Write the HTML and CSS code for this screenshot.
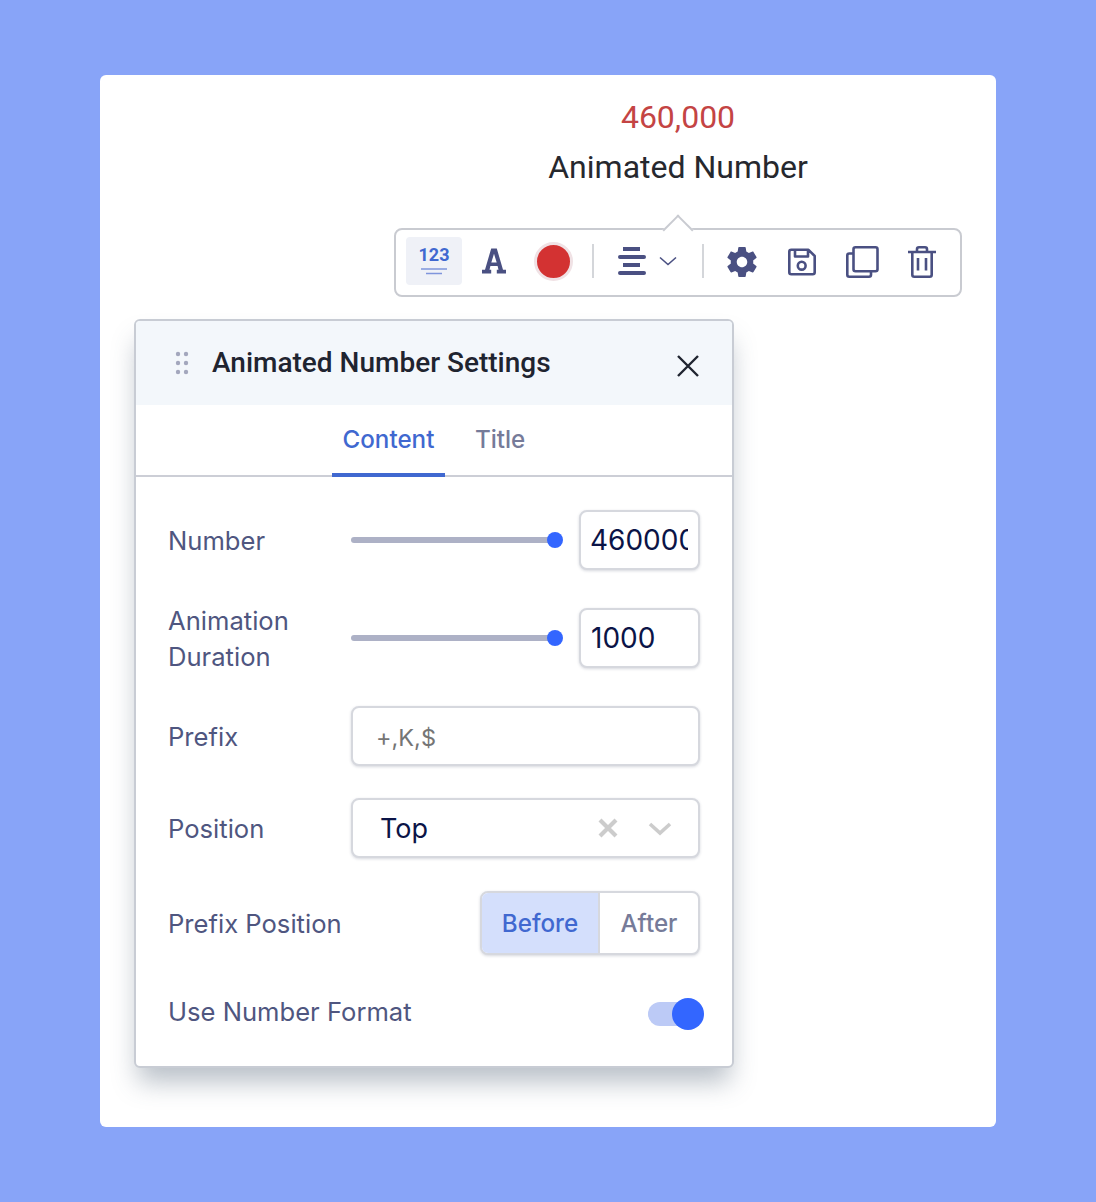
FILE: index.html
```html
<!DOCTYPE html>
<html lang="en">
<head>
  <meta charset="UTF-8" />
  <meta name="viewport" content="width=device-width, initial-scale=1.0"/>
  <title>Animated Number</title>
  <link rel="stylesheet" href="styles.css">
</head>
<body>
  <div class="card">
    <div class="widget">
      <div class="number">460,000</div>
      <div class="number-title">Animated Number</div>

      <div class="toolbar">
        <span class="toolbar-arrow"></span>
        <span class="tool tool-active">
          <svg width="32" height="34" viewBox="0 0 32 34">
            <text x="16" y="17" class="tool-123">123</text>
            <path d="M3 25H29M8 29.500H24" stroke="#7f95dc" stroke-width="1.500" fill="none"/>
          </svg>
        </span>
        <span class="tool tool-font">
          <svg width="26" height="28" viewBox="0 0 26 28">
            <path d="M10.200 1.500H15.800L22 22.700H25V26.500H15.800V22.700H17.500L16.600 19H9.400L8.500 22.700H10.200V26.500H1V22.700H4ZM13 6.800L10.300 15.500H15.700Z" fill="#4a5082" fill-rule="evenodd"/>
          </svg>
        </span>
        <span class="color-dot"></span>
        <span class="tool-sep sep-one"></span>
        <span class="tool-align">
          <svg width="30" height="30" viewBox="0 0 30 30">
            <path d="M6 3H23M6 19H23" stroke="#4a5082" stroke-width="4" fill="none"/>
            <path d="M3 11H27M3 27H27" stroke="#4a5082" stroke-width="4" stroke-linecap="round" fill="none"/>
          </svg>
          <svg class="align-caret" width="18" height="10" viewBox="0 0 18 10">
            <path d="M1 1.500L9 8.500L17 1.500" stroke="#4a5082" stroke-width="1.600" fill="none"/>
          </svg>
        </span>
        <span class="tool-sep sep-two"></span>
        <svg class="tool-gear" width="36" height="36" viewBox="0 0 24 24">
          <path d="M19.430 12.980c.04-.32.070-.64.070-.98s-.03-.66-.07-.98l2.110-1.650c.19-.15.240-.42.120-.64l-2-3.460c-.12-.22-.39-.30-.61-.22l-2.490 1c-.52-.40-1.080-.73-1.690-.98l-.38-2.650A.488.488 0 0 0 14 2h-4c-.25 0-.46.180-.49.420l-.38 2.650c-.61.250-1.170.590-1.690.98l-2.490-1c-.23-.090-.49 0-.61.220l-2 3.460c-.13.220-.07.490.12.640l2.110 1.650c-.04.320-.07.650-.07.980s.03.660.07.980l-2.110 1.650c-.19.150-.24.420-.12.640l2 3.460c.12.220.39.300.61.220l2.490-1c.52.400 1.080.730 1.690.980l.38 2.650c.03.240.24.420.49.420h4c.25 0 .46-.180.49-.420l.38-2.650c.61-.250 1.170-.590 1.690-.980l2.490 1c.23.090.49 0 .61-.220l2-3.460c.12-.220.070-.490-.12-.640l-2.110-1.650zM12 15.500c-1.930 0-3.500-1.570-3.500-3.500s1.570-3.500 3.500-3.500 3.500 1.570 3.500 3.500-1.570 3.500-3.500 3.500z" fill="#4a5082"/>
        </svg>
        <svg class="tool-save" width="30" height="30" viewBox="0 0 30 30">
          <path d="M4.300 2.800H21.500L27.700 9V25.200A2 2 0 0 1 25.700 27.200H4.300A2 2 0 0 1 2.300 25.200V4.800A2 2 0 0 1 4.300 2.800ZM8 2.800V9.500H21V2.800" stroke="#4a5082" stroke-width="2.600" stroke-linejoin="round" fill="none"/>
          <circle cx="14.700" cy="18.700" r="3.900" stroke="#4a5082" stroke-width="2.600" fill="none"/>
        </svg>
        <svg class="tool-copy" width="34" height="34" viewBox="0 0 34 34">
          <rect x="8.500" y="2.300" width="24" height="24" rx="2" stroke="#4a5082" stroke-width="2.600" fill="none"/>
          <path d="M8.500 8.500H4.300A2 2 0 0 0 2.300 10.500V29.700A2 2 0 0 0 4.300 31.700H24A2 2 0 0 0 26 29.700V26.300" stroke="#4a5082" stroke-width="2.600" fill="none"/>
        </svg>
        <svg class="tool-trash" width="28" height="34" viewBox="0 0 28 34">
          <path d="M0 7H28M9 7V4.300A2 2 0 0 1 11 2.300H17A2 2 0 0 1 19 4.300V7M4.300 7V29.700A2 2 0 0 0 6.300 31.700H21.700A2 2 0 0 0 23.700 29.700V7M10 13V25.500M18 13V25.500" stroke="#4a5082" stroke-width="2.600" fill="none"/>
        </svg>
      </div>
    </div>

    <div class="panel">
      <div class="panel-head">
        <svg class="drag" width="14" height="24" viewBox="0 0 14 24">
          <g fill="#a3a7bd">
            <circle cx="3" cy="3" r="2.200"/><circle cx="11" cy="3" r="2.200"/>
            <circle cx="3" cy="12" r="2.200"/><circle cx="11" cy="12" r="2.200"/>
            <circle cx="3" cy="21" r="2.200"/><circle cx="11" cy="21" r="2.200"/>
          </g>
        </svg>
        <h2>Animated Number Settings</h2>
        <svg class="close" width="24" height="24" viewBox="0 0 24 24">
          <path d="M2 2L22 22M22 2L2 22" stroke="#1f2430" stroke-width="2.400" fill="none"/>
        </svg>
      </div>

      <div class="tabs">
        <div class="tab tab-active">Content</div>
        <div class="tab">Title</div>
      </div>

      <div class="rows">
        <div class="row row-number">
          <label>Number</label>
          <div class="slider"><span class="thumb"></span></div>
          <div class="box box-small"><span class="clip">460000</span></div>
        </div>
        <div class="row row-duration">
          <label>Animation<br>Duration</label>
          <div class="slider"><span class="thumb"></span></div>
          <div class="box box-small">1000</div>
        </div>
        <div class="row row-prefix">
          <label>Prefix</label>
          <div class="box box-wide placeholder">+,K,$</div>
        </div>
        <div class="row row-position">
          <label>Position</label>
          <div class="box box-wide select">
            <span class="select-value">Top</span>
            <svg class="select-x" width="20" height="20" viewBox="0 0 20 20">
              <path d="M2 2L18 18M18 2L2 18" stroke="#cccccc" stroke-width="4.200" fill="none"/>
            </svg>
            <svg class="select-caret" width="24" height="14" viewBox="0 0 24 14">
              <path d="M2 2L12 11L22 2" stroke="#cccccc" stroke-width="3.600" fill="none"/>
            </svg>
          </div>
        </div>
        <div class="row row-prefixpos">
          <label>Prefix Position</label>
          <div class="toggle-group">
            <span class="choice choice-on">Before</span>
            <span class="choice">After</span>
          </div>
        </div>
        <div class="row row-format">
          <label>Use Number Format</label>
          <div class="switch"><span class="switch-knob"></span></div>
        </div>
      </div>
    </div>
  </div>
</body>
</html>
```

FILE: styles.css
```css
body {
  margin: 0;
  padding: 75px 100px;
  background-color: #88a4f8;
  font-family: "Roboto", sans-serif;
}

.card {
  height: 1052px;
  background-color: #ffffff;
  border-radius: 6px;
  overflow: hidden;
}

.widget {
  width: 566px;
  margin-left: 295px;
  padding-top: 23px;
  text-align: center;
}

.number {
  font-size: 32px;
  line-height: 38px;
  color: #c44444;
}

.number-title {
  margin-top: 12px;
  font-size: 32px;
  line-height: 38px;
  color: #26282e;
}

.toolbar {
  position: relative;
  display: flex;
  align-items: center;
  width: 554px;
  height: 62px;
  margin-top: 42px;
  margin-left: -1px;
  padding-left: 10px;
  padding-bottom: 3px;
  background: #ffffff;
  border: 2px solid #c9cbd1;
  border-radius: 8px;
}

.toolbar-arrow {
  position: absolute;
  left: 271px;
  top: -11px;
  width: 20px;
  height: 20px;
  background: #ffffff;
  border-left: 2px solid #c9cbd1;
  border-top: 2px solid #c9cbd1;
  transform: rotate(45deg);
}

.tool {
  display: flex;
  align-items: center;
  justify-content: center;
}

.tool-active {
  width: 56px;
  height: 48px;
  background-color: #eff1f7;
  border-radius: 4px;
}

.tool-123 {
  font-family: "Roboto", sans-serif;
  font-size: 18px;
  font-weight: 700;
  fill: #4068d0;
  text-anchor: middle;
}

.tool-font {
  margin-left: 19px;
}

.color-dot {
  width: 33px;
  height: 33px;
  margin-left: 27px;
  background-color: #d33232;
  border: 3px solid #f0e2e5;
  border-radius: 50%;
}

.tool-sep {
  width: 2px;
  height: 34px;
  background-color: #d4d6da;
}

.sep-one {
  margin-left: 19px;
}

.tool-align {
  display: flex;
  align-items: center;
  margin-left: 23px;
}

.align-caret {
  margin-left: 12px;
}

.sep-two {
  margin-left: 25px;
}

.tool-gear {
  margin-left: 20px;
  margin-top: 2px;
}

.tool-save {
  margin-left: 27px;
  margin-top: 1px;
}

.tool-copy {
  margin-left: 28px;
  margin-top: 2px;
}

.tool-trash {
  margin-left: 29px;
  margin-top: 2px;
}

.panel {
  width: 596px;
  height: 745px;
  margin-top: 22px;
  margin-left: 34px;
  background: #ffffff;
  border: 2px solid #c8ccd4;
  border-radius: 6px;
  box-shadow: 0 18px 26px -4px rgba(70, 90, 110, 0.38);
  overflow: hidden;
}

.panel-head {
  display: flex;
  align-items: center;
  height: 84px;
  padding-left: 39px;
  background-color: #f3f7fb;
}

.panel-head h2 {
  margin: 0 0 2px 23px;
  font-size: 28px;
  font-weight: 500;
  color: #1f2430;
}

.close {
  margin-left: auto;
  margin-right: 32px;
  margin-top: 6px;
}

.tabs {
  display: flex;
  gap: 30px;
  height: 70px;
  padding-left: 196px;
  border-bottom: 2px solid #ccced6;
}

.tab {
  height: 70px;
  padding: 0 10.500px;
  font-family: "Inter", sans-serif;
  font-size: 24.200px;
  font-weight: 500;
  line-height: 70px;
  color: #767b99;
  box-sizing: border-box;
}

.tab + .tab {
  padding: 0;
}

.tab-active {
  height: 72px;
  color: #4068d0;
  border-bottom: 4px solid #4068d0;
}

.rows {
  padding: 0 32px;
}

.row {
  display: flex;
  align-items: center;
}

.row label {
  flex: none;
  width: 183px;
  padding-top: 2px;
  font-family: "Inter", sans-serif;
  font-size: 25.600px;
  line-height: 36px;
  color: #4f5680;
}

.row-number {
  height: 60px;
  margin-top: 33px;
}

.row-duration {
  height: 60px;
  margin-top: 38px;
}

.row-prefix {
  height: 60px;
  margin-top: 38px;
}

.row-position {
  height: 60px;
  margin-top: 32px;
}

.row-prefixpos {
  height: 64px;
  margin-top: 33px;
}

.row-prefixpos label,
.row-format label {
  width: auto;
}

.row-format {
  height: 40px;
  margin-top: 39px;
  justify-content: space-between;
}

.row-format label {
  margin-bottom: 6px;
}

.slider {
  position: relative;
  width: 204px;
  height: 6px;
  background-color: #adb1c6;
  border-radius: 3px;
}

.thumb {
  position: absolute;
  right: -8px;
  top: -5px;
  width: 16px;
  height: 16px;
  background-color: #3366ff;
  border-radius: 50%;
}

.box {
  display: flex;
  align-items: center;
  height: 60px;
  background: #ffffff;
  border: 2px solid #d6d8de;
  border-radius: 8px;
  box-shadow: 0 1px 3px rgba(50, 60, 90, 0.2);
  box-sizing: border-box;
  font-family: "Inter", sans-serif;
  font-size: 28px;
  color: #0b1447;
}

.box-small {
  width: 121px;
  margin-left: 24px;
  padding-left: 10px;
}

.clip {
  display: block;
  width: 98px;
  margin-left: -1px;
  overflow: hidden;
}

.box-wide {
  flex: 1;
}

.placeholder {
  padding-top: 2px;
  padding-left: 23px;
  font-size: 23.500px;
  color: #757575;
}

.select-value {
  margin-left: 27px;
  font-size: 27px;
}

.select-x {
  margin-left: auto;
}

.select-caret {
  margin-left: 30px;
  margin-right: 26px;
  margin-top: 2px;
}

.toggle-group {
  display: flex;
  height: 64px;
  margin-left: auto;
  background: #ffffff;
  border: 2px solid #d6d8de;
  border-radius: 8px;
  box-shadow: 0 1px 3px rgba(50, 60, 90, 0.2);
  box-sizing: border-box;
  overflow: hidden;
}

.choice {
  width: 98px;
  line-height: 62px;
  text-align: center;
  font-family: "Inter", sans-serif;
  font-size: 24.200px;
  font-weight: 500;
  color: #767b99;
}

.choice-on {
  width: 116px;
  background-color: #d4dffc;
  color: #4068d0;
  border-right: 2px solid #d6d8de;
}

.switch {
  position: relative;
  width: 52px;
  height: 24px;
  background-color: #bccaf6;
  border-radius: 12px;
}

.switch-knob {
  position: absolute;
  right: -4px;
  top: -4px;
  width: 32px;
  height: 32px;
  background-color: #3366ff;
  border-radius: 50%;
}
```
